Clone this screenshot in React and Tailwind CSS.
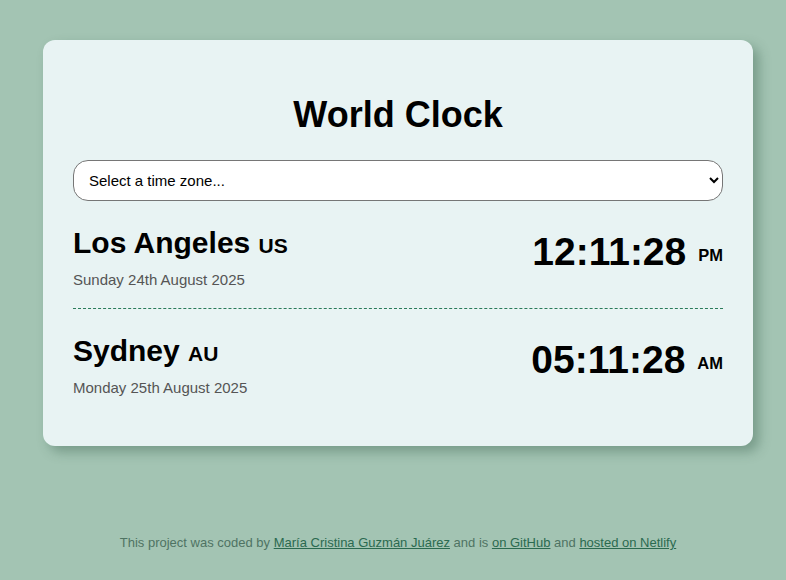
import React from 'react';

const cities = [
    { name: 'Los Angeles', code: 'US', date: 'Sunday 24th August 2025', time: '12:11:28', period: 'PM' },
    { name: 'Sydney', code: 'AU', date: 'Monday 25th August 2025', time: '05:11:28', period: 'AM' },
];

const App = () => {
    return (
        <div className="min-h-[580px] bg-[#a3c4b3] pt-[40px] font-['Liberation_Sans',Arial,sans-serif] text-black">
            <div className="w-[710px] ml-[43px]">
                {/* Card */}
                <div className="bg-[#e8f3f3] rounded-[12px] px-[30px] pt-[30px] pb-[30px] shadow-[6px_6px_12px_rgba(40,80,60,0.35)]">
                    <h1 className="my-[24px] text-center text-[36px] font-bold leading-[42px]">World Clock</h1>

                    <select className="block w-full h-[41px] bg-white border border-[#767676] rounded-[15px] pl-[11px] pr-[6px] text-[15px] text-black">
                        <option>Select a time zone...</option>
                    </select>

                    {cities.map((city, i) => (
                        <div
                            key={city.name}
                            className={
                                'flex justify-between items-start pt-[24px] pb-[20px] ' +
                                (i === 0 ? 'border-b border-dashed border-[#2a7b5a]' : '')
                            }
                        >
                            <div>
                                <div className="text-[30px] font-bold leading-[35px]">
                                    {city.name} <span className="text-[21px] leading-none">{city.code}</span>
                                </div>
                                <div className="mt-[11px] text-[15px] leading-[17px] text-[#555]">{city.date}</div>
                            </div>
                            <div className="mt-[4px] flex items-baseline">
                                <span className="text-[39px] font-bold leading-[45px]">{city.time}</span>
                                <span className="ml-[12px] text-[16.5px] font-bold leading-none relative bottom-[4px]">{city.period}</span>
                            </div>
                        </div>
                    ))}
                </div>

                {/* Footer */}
                <p className="mt-[89px] text-center text-[13px] leading-[15px] text-[#4f7363]">
                    This project was coded by{' '}
                    <a href="#" className="underline text-[#2b6a50]">María Cristina Guzmán Juárez</a> and is{' '}
                    <a href="#" className="underline text-[#2b6a50]">on GitHub</a> and{' '}
                    <a href="#" className="underline text-[#2b6a50]">hosted on Netlify</a>
                </p>
            </div>
        </div>
    );
};

export default App;
